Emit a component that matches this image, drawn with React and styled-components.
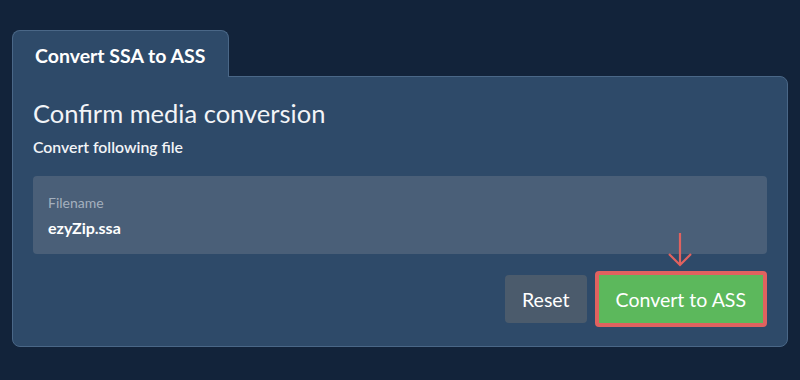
import React from 'react';
import styled, { createGlobalStyle } from 'styled-components';

const GlobalStyle = createGlobalStyle`
    html, body {
        margin:0;
        padding:0;
        background:#12233a;
        font-family:Lato, "Open Sans", sans-serif;
    }
`;

const Page = styled.div`
    width:800px;
    height:380px;
    box-sizing:border-box;
    padding:30px 12px 0 12px;
`;

const Tab = styled.div`
    position:relative;
    z-index:1;
    display:inline-block;
    box-sizing:border-box;
    width:217px;
    height:47px;
    margin-bottom:-1px;
    padding-left:22px;
    background:#2e4a69;
    border:1px solid #4a6787;
    border-bottom:none;
    border-radius:8px 8px 0 0;
    color:#fff;
    font-size:19.5px;
    font-weight:700;
    line-height:50px;
`;

const Panel = styled.div`
    box-sizing:border-box;
    width:776px;
    padding:18px 20px 19px 20px;
    background:#2e4a69;
    border:1px solid #4a6787;
    border-radius:0 8px 8px 8px;
`;

const Title = styled.h1`
    margin:0;
    color:#f2f4f7;
    font-size:25.5px;
    font-weight:400;
    line-height:36px;
`;

const Subtitle = styled.p`
    margin:6px 0 0 0;
    color:#f2f4f7;
    font-size:15.8px;
    font-weight:600;
    line-height:20px;
`;

const Field = styled.div`
    margin-top:19px;
    height:78px;
    box-sizing:border-box;
    padding:18px 15px 0 15px;
    background:#4a5f78;
    border-radius:4px;
`;

const Label = styled.div`
    color:#a4b0be;
    font-size:14px;
    line-height:17px;
`;

const Value = styled.div`
    margin-top:7px;
    color:#fff;
    font-size:16px;
    font-weight:700;
    line-height:20px;
`;

const Actions = styled.div`
    display:flex;
    justify-content:flex-end;
    align-items:center;
    gap:8px;
    margin-top:17px;
`;

const Button = styled.button`
    box-sizing:border-box;
    height:${({ primary }) => (primary ? '56px' : '48px')};
    padding:0 17px;
    background:${({ primary }) => (primary ? '#5cb85c' : '#4b5b6c')};
    border:${({ primary }) => (primary ? '4px solid #e0625f' : 'none')};
    border-radius:4px;
    color:#fff;
    font-family:Lato, sans-serif;
    font-size:19.5px;
    font-weight:400;
    cursor:pointer;
`;

const Highlight = styled.div`
    position:relative;
    display:flex;
`;

const Arrow = styled.svg`
    position:absolute;
    left:50%;
    top:-39px;
    margin-left:-14px;
`;

const App = () => {
    return (
        <>
            <GlobalStyle />
            <Page>
                <Tab>Convert SSA to ASS</Tab>
                <Panel>
                    <Title>Confirm media conversion</Title>
                    <Subtitle>Convert following file</Subtitle>
                    <Field>
                        <Label>Filename</Label>
                        <Value>ezyZip.ssa</Value>
                    </Field>
                    <Actions>
                        <Button>Reset</Button>
                        <Highlight>
                            <Arrow width="26" height="36" viewBox="0 0 26 36">
                                <path d="M13 1 V33 M2 22 L13 33 L24 22" fill="none" stroke="#e0625f" strokeWidth="2.2" />
                            </Arrow>
                            <Button primary>Convert to ASS</Button>
                        </Highlight>
                    </Actions>
                </Panel>
            </Page>
        </>
    );
};

export default App;
